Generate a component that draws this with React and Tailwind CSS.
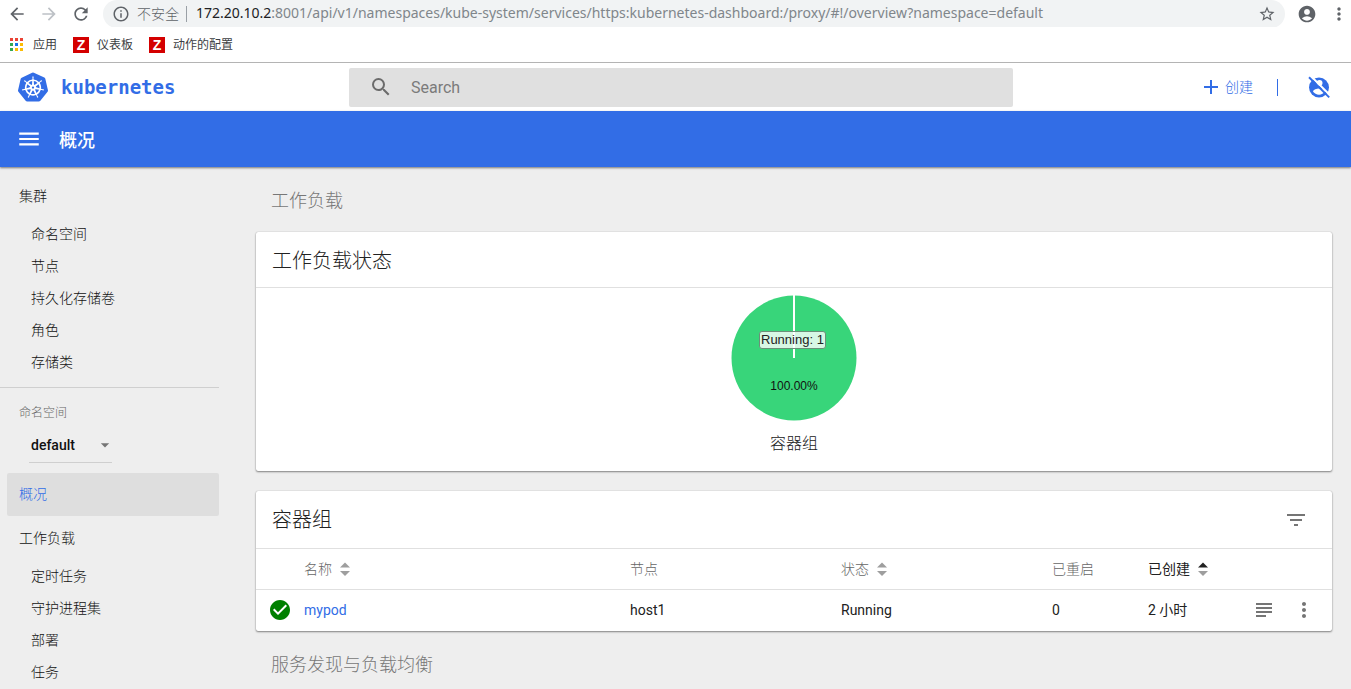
import React from 'react';
import {
  MdArrowBack, MdArrowForward, MdRefresh, MdInfoOutline, MdStarBorder, MdAccountCircle,
  MdMoreVert, MdSearch, MdAdd, MdMenu, MdFilterList, MdSubject, MdCheckCircle, MdArrowDropDown,
} from 'react-icons/md';
import { SiKubernetes } from 'react-icons/si';

const URL_HOST = '172.20.10.2';
const URL_REST = ':8001/api/v1/namespaces/kube-system/services/https:kubernetes-dashboard:/proxy/#!/overview?namespace=default';

function AppsIcon() {
  const colors = ['#ea4335', '#ea4335', '#ea4335', '#34a853', '#1a73e8', '#fbbc04', '#34a853', '#fbbc04', '#fbbc04'];
  return (
    <svg width="14" height="14" viewBox="0 0 14 14" aria-hidden="true">
      {colors.map((c, i) => (
        <rect key={i} x={(i % 3) * 5} y={Math.floor(i / 3) * 5} width="3" height="3" fill={c} />
      ))}
    </svg>
  );
}

function Bookmark({ children }) {
  return (
    <a href="#" className="flex items-center gap-2">
      <span className="flex h-4 w-4 items-center justify-center bg-[#d40000] font-['Liberation_Sans'] text-[14px] font-bold leading-none text-white">Z</span>
      {children}
    </a>
  );
}

function BrowserBar() {
  return (
    <div className="border-b border-[#b4b4b4] bg-white text-[#5f6368]">
      <div className="flex h-[27px] items-center overflow-hidden pr-[2px]">
        <div className="flex w-[103px] shrink-0 items-center gap-3 pl-[7px]">
          <button aria-label="后退"><MdArrowBack size={20} /></button>
          <button aria-label="前进" className="text-[#bdc1c6]"><MdArrowForward size={20} /></button>
          <button aria-label="重新加载"><MdRefresh size={20} /></button>
        </div>
        <div className="flex h-7 min-w-0 flex-1 items-center rounded-full bg-[#f1f3f4] pl-[9px] pr-[9px]">
          <MdInfoOutline size={18} className="shrink-0" />
          <span className="ml-[7px] shrink-0 border-r border-[#9aa0a6] pr-[7px] text-[14px] font-light leading-4">不安全</span>
          <span className="ml-[9px] min-w-0 flex-1 truncate pb-0.5 font-['Noto_Sans'] text-[14px] leading-5 text-[#80868b]">
            <span className="text-[#202124]">{URL_HOST}</span>{URL_REST}
          </span>
          <button aria-label="收藏"><MdStarBorder size={18} /></button>
        </div>
        <div className="flex shrink-0 items-center gap-3 pl-3">
          <button aria-label="用户"><MdAccountCircle size={20} /></button>
          <button aria-label="菜单"><MdMoreVert size={20} /></button>
        </div>
      </div>
      <div className="flex h-[35px] items-center gap-4 pl-[10px] text-[12px] text-[#3c4043]">
        <a href="#" className="flex items-center gap-[9px]"><AppsIcon />应用</a>
        <Bookmark>仪表板</Bookmark>
        <Bookmark>动作的配置</Bookmark>
      </div>
    </div>
  );
}

function AccountOffIcon() {
  return (
    <svg width="24" height="24" viewBox="0 0 24 24" aria-hidden="true">
      <circle cx="12" cy="12.500" r="10" fill="#326de6" />
      <circle cx="12.500" cy="8" r="3" fill="#fff" />
      <path d="M6 16.500c0-2 4-3.100 6-3.100s6 1.100 6 3.100c-1.300 2-3.500 3.200-6 3.200S7.300 18.500 6 16.500z" fill="#fff" />
      <path d="M3.800 1 23.500 20.700" stroke="#fff" strokeWidth="2" />
      <path d="M2 2.200 22.200 22.400" stroke="#326de6" strokeWidth="2" />
    </svg>
  );
}

function Header() {
  return (
    <header className="grid h-12 grid-cols-[349px_1fr_338px] items-center bg-white text-[#326de6]">
      <a href="#" className="flex items-center gap-3 pl-[18px]">
        <SiKubernetes size={30} />
        <span className="pl-px font-['DejaVu_Sans_Mono',monospace] text-[19px] font-bold leading-6">kubernetes</span>
      </a>
      <label className="flex h-[39px] items-center gap-[18px] rounded-xs bg-[#e0e0e0] pl-5 text-[#6b6b6b]">
        <MdSearch size={24} />
        <input aria-label="Search" placeholder="Search" className="min-w-0 flex-1 bg-transparent pt-0.5 text-[16px] outline-none placeholder:text-[#7b7b7b]" />
      </label>
      <div className="flex items-center justify-end pr-5">
        <button className="flex items-center gap-0.5 text-[14px] font-light"><MdAdd size={24} />创建</button>
        <span className="ml-6 mr-[29px] h-[17px] w-px bg-[#326de6]" />
        <button aria-label="账户"><AccountOffIcon /></button>
      </div>
    </header>
  );
}

function NavGroup({ title, items }) {
  return (
    <div>
      <a href="#" className="flex h-11 items-center pl-[19px]">{title}</a>
      {items.map((item) => (
        <a key={item} href="#" className="flex h-8 items-center pl-[31px]">{item}</a>
      ))}
    </div>
  );
}

function Sidebar() {
  return (
    <nav className="w-[219px] shrink-0 pt-[7px] text-[14px] font-light text-[#111111]">
      <NavGroup title="集群" items={['命名空间', '节点', '持久化存储卷', '角色', '存储类']} />
      <div className="mt-[9px] border-t border-[#cfcfcf] pt-[17px]">
        <label htmlFor="namespace" className="block pl-[19px] text-[12px] leading-4 text-[#666666]">命名空间</label>
        <div className="relative ml-[29px] mt-[7px] flex h-[35px] w-[83px] items-center border-b border-[#cfcfcf]">
          <select id="namespace" className="w-full appearance-none bg-transparent pl-0.5 text-[14px] font-medium outline-none">
            <option>default</option>
          </select>
          <MdArrowDropDown size={20} className="pointer-events-none absolute right-[-3px] text-[#757575]" />
        </div>
      </div>
      <a href="#" className="ml-[7px] mt-2.5 flex h-[43px] items-center rounded-xs bg-[#dedede] pl-3 text-[#326de6]">概况</a>
      <NavGroup title="工作负载" items={['定时任务', '守护进程集', '部署', '任务']} />
    </nav>
  );
}

function Card({ children }) {
  return (
    <section className="rounded-xs bg-white shadow-[0_1px_2px_rgba(0,0,0,0.45),0_0_1px_rgba(0,0,0,0.3)]">{children}</section>
  );
}

function StatusChart() {
  return (
    <figure className="flex flex-col items-center pb-[15px] pt-[7px]">
      <div className="relative">
        <svg width="126" height="126" viewBox="0 0 126 126" role="img" aria-label="Running 100.00%">
          <circle cx="63" cy="63" r="62.500" fill="#38d57a" />
          <path d="M63 0V63" stroke="#fff" strokeWidth="2" />
          <text x="63" y="95" textAnchor="middle" fontFamily="Liberation Sans, sans-serif" fontSize="12" fill="#111">100.00%</text>
        </svg>
        <div className="absolute left-7 top-9 whitespace-nowrap rounded-[3px] border border-[#6b8f79] bg-white/80 px-px font-['Liberation_Sans'] text-[13px] leading-4 text-[#222]">Running: 1</div>
      </div>
      <figcaption className="mt-[11px] text-[16px] font-light leading-6">容器组</figcaption>
    </figure>
  );
}

function SortIcon({ asc = false }) {
  return (
    <svg width="10" height="14" viewBox="0 0 10 14" aria-hidden="true">
      <path d="M0 5.500 5 0.500 10 5.500z" fill={asc ? '#212121' : '#9e9e9e'} />
      <path d="M0 9 5 14 10 9z" fill="#9e9e9e" />
    </svg>
  );
}

function PodTable() {
  return (
    <table className="w-full table-fixed text-left text-[14px]">
      <colgroup>
        <col className="w-12" />
        <col />
        <col className="w-[211px]" />
        <col className="w-[211px]" />
        <col className="w-24" />
        <col className="w-24" />
        <col className="w-[88px]" />
      </colgroup>
      <thead>
        <tr className="h-[41px] border-y border-[#e0e0e0] text-[#666666]">
          <th aria-label="就绪" />
          <th className="font-light"><button className="flex items-center gap-2">名称<SortIcon /></button></th>
          <th className="font-light">节点</th>
          <th className="font-light"><button className="flex items-center gap-2">状态<SortIcon /></button></th>
          <th className="font-light">已重启</th>
          <th className="font-normal text-[#212121]"><button className="flex items-center gap-2">已创建<SortIcon asc /></button></th>
          <th aria-label="操作" />
        </tr>
      </thead>
      <tbody>
        <tr className="h-[41px]">
          <td className="pl-3"><MdCheckCircle size={24} color="#008000" /></td>
          <td><a href="#" className="text-[#326de6]">mypod</a></td>
          <td>host1</td>
          <td>Running</td>
          <td>0</td>
          <td>2 小时</td>
          <td>
            <div className="flex items-center gap-4 pl-2 text-[#757575]">
              <button aria-label="日志"><MdSubject size={24} /></button>
              <button aria-label="更多"><MdMoreVert size={24} /></button>
            </div>
          </td>
        </tr>
      </tbody>
    </table>
  );
}

export default function App() {
  return (
    <div className="min-h-screen bg-[#eeeeee] font-[Roboto,'Noto_Sans_CJK_SC',sans-serif] text-[#212121]">
      <BrowserBar />
      <Header />
      <div className="flex h-14 items-center gap-[17px] bg-[#326de6] pl-4 text-white shadow-[0_1px_2px_rgba(0,0,0,0.5)]">
        <button aria-label="导航"><MdMenu size={26} /></button>
        <h1 className="pt-0.5 text-[18px] font-medium">概况</h1>
      </div>
      <div className="flex">
        <Sidebar />
        <main className="ml-[37px] mr-[19px] min-w-0 flex-1">
          <h2 className="flex h-[65px] items-center pl-[15px] pt-0.5 text-[18px] font-light text-[#777777]">工作负载</h2>
          <Card>
            <h3 className="flex h-14 items-center border-b border-[#e0e0e0] px-4 pt-0.5 text-[20px] font-light">工作负载状态</h3>
            <StatusChart />
          </Card>
          <div className="mt-5">
            <Card>
              <div className="flex h-[57px] items-center justify-between pl-4 pr-6">
                <h3 className="text-[20px] font-light">容器组</h3>
                <button aria-label="筛选" className="text-[#757575]"><MdFilterList size={24} /></button>
              </div>
              <PodTable />
            </Card>
          </div>
          <h2 className="flex items-center pl-[15px] pt-5 text-[18px] font-light leading-7 text-[#777777]">服务发现与负载均衡</h2>
        </main>
      </div>
    </div>
  );
}
